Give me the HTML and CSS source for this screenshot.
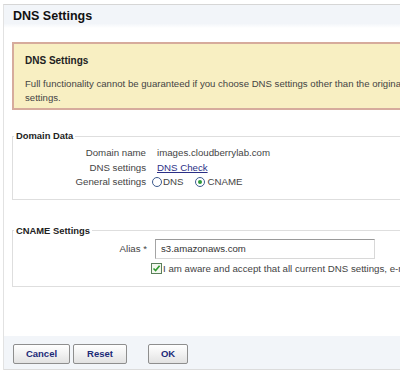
FILE: index.html
```html
<!DOCTYPE html>
<html lang="en">
<head>
    <meta charset="UTF-8">
    <title>DNS Settings</title>
    <link rel="stylesheet" href="styles.css">
</head>
<body>
    <div class="page">
        <div class="page-header">
            <h1>DNS Settings</h1>
        </div>

        <div class="content">
            <div class="warning">
                <h2>DNS Settings</h2>
                <p>Full functionality cannot be guaranteed if you choose DNS settings other than the original DNS settings.</p>
            </div>

            <fieldset class="group">
                <legend>Domain Data</legend>
                <div class="form-grid domain-grid">
                    <span class="label">Domain name</span>
                    <span class="value">images.cloudberrylab.com</span>

                    <span class="label">DNS settings</span>
                    <span class="value"><a href="#">DNS Check</a></span>

                    <span class="label">General settings</span>
                    <span class="radios">
                        <span class="radio"></span>DNS
                        <span class="radio checked"></span>CNAME
                    </span>
                </div>
            </fieldset>

            <fieldset class="group cname-group">
                <legend>CNAME Settings</legend>
                <div class="form-grid cname-grid">
                    <span class="label">Alias *</span>
                    <span class="input-wrap"><span class="text-input">s3.amazonaws.com</span></span>

                    <span></span>
                    <span class="check-row">
                        <span class="checkbox">
                            <svg viewBox="0 0 9 9" width="9" height="9">
                                <path d="M1.5 4.5 L3.6 6.6 L7.6 1.8" fill="none" stroke="#2f9a2f" stroke-width="1.6"/>
                            </svg>
                        </span>I am aware and accept that all current DNS settings, e-mail settings and web hosting will be lost.
                    </span>
                </div>
            </fieldset>
        </div>

        <div class="button-bar">
            <button class="btn">Cancel</button>
            <button class="btn">Reset</button>
            <button class="btn btn-ok">OK</button>
        </div>
    </div>
</body>
</html>
```

FILE: styles.css
```css
body {
    margin: 0;
    width: 400px;
    height: 373px;
    overflow: hidden;
    font-family: "Liberation Sans", Arial, sans-serif;
    font-size: 9.7px;
    color: #444;
    background: #fff;
}

.page {
    margin: 4px 0 0 3px;
    width: 460px;
    border-top: 1px solid #d6d6d6;
    border-left: 1px solid #e2e2e2;
}

.page-header {
    height: 23px;
    padding-left: 9px;
    background: linear-gradient(to bottom, #f2f5f9 0%, #f2f5f9 80%, #ffffff 100%);
}

.page-header h1 {
    margin: 0;
    font-size: 12.5px;
    line-height: 23px;
    font-weight: bold;
    color: #111;
}

.content {
    padding: 14px 0 0 8px;
}

.warning {
    background: #f8efc2;
    border: 2px solid #d6ab9c;
    padding: 10px 11px 3px 11px;
}

.warning h2 {
    margin: 0 0 9px 0;
    font-size: 10px;
    line-height: 14px;
    color: #222;
}

.warning p {
    margin: 0;
    font-size: 9.6px;
    line-height: 14px;
    color: #444;
}

.group {
    margin: 19px 0 0 0;
    padding: 3px 0 9px 0;
    border: 1px solid #dedede;
}

.group legend {
    margin-left: 1px;
    padding: 0 2px;
    font-size: 9.4px;
    font-weight: bold;
    line-height: 14px;
    color: #222;
}

.cname-group {
    margin-top: 24px;
    padding-top: 1px;
    padding-bottom: 10px;
}

.form-grid {
    display: grid;
    align-items: center;
}

.domain-grid {
    grid-template-columns: 133px auto;
    column-gap: 6px;
    line-height: 14.5px;
}

.cname-grid {
    grid-template-columns: 134px auto;
    column-gap: 4px;
    row-gap: 3px;
    line-height: 14px;
}

.label {
    text-align: right;
    color: #444;
}

.value {
    padding-left: 5px;
}

.value a {
    color: #2b2f86;
    text-decoration: underline;
}

.radios {
    display: flex;
    align-items: center;
}

.radio {
    display: inline-block;
    width: 8px;
    height: 8px;
    border: 1px solid #3c5a8e;
    border-radius: 50%;
    margin-right: 1px;
    background: #fff;
    position: relative;
}

.radio.checked {
    margin-left: 12px;
    margin-right: 2px;
}

.radio.checked::after {
    content: '';
    position: absolute;
    left: 2px;
    top: 2px;
    width: 4px;
    height: 4px;
    border-radius: 50%;
    background: #2e9a3a;
}

.input-wrap {
    padding-left: 4px;
}

.text-input {
    display: block;
    box-sizing: border-box;
    width: 220px;
    height: 20px;
    padding: 0 5px;
    line-height: 18px;
    font-size: 9.6px;
    color: #333;
    background: #fff;
    border: 1px solid #d8d8d8;
    border-top-color: #9a9a9a;
    border-left-color: #a4a4a4;
}

.check-row {
    display: flex;
    align-items: center;
    white-space: nowrap;
    color: #444;
}

.checkbox {
    display: inline-flex;
    align-items: center;
    justify-content: center;
    box-sizing: border-box;
    width: 11px;
    height: 11px;
    margin-right: 1px;
    border: 1px solid #5a7f5a;
    background: #f4f8f0;
}

.button-bar {
    margin-top: 49px;
    height: 34px;
    padding: 8px 0 0 9px;
    box-sizing: border-box;
    background: #f2f5f9;
    border-bottom: 1px solid #dcdcdc;
    display: flex;
    align-items: flex-start;
    gap: 3px;
}

.btn {
    height: 20px;
    padding: 0;
    font-family: "Liberation Sans", Arial, sans-serif;
    font-size: 9.5px;
    font-weight: bold;
    color: #1c2a78;
    background: linear-gradient(to bottom, #ffffff 0%, #f1f1f1 50%, #e2e2e2 100%);
    border: 1px solid #8e8e8e;
    border-radius: 2px;
}

.btn:nth-child(1) {
    width: 57px;
}

.btn:nth-child(2) {
    width: 54px;
}

.btn-ok {
    width: 40px;
    margin-left: 18px;
}
```
